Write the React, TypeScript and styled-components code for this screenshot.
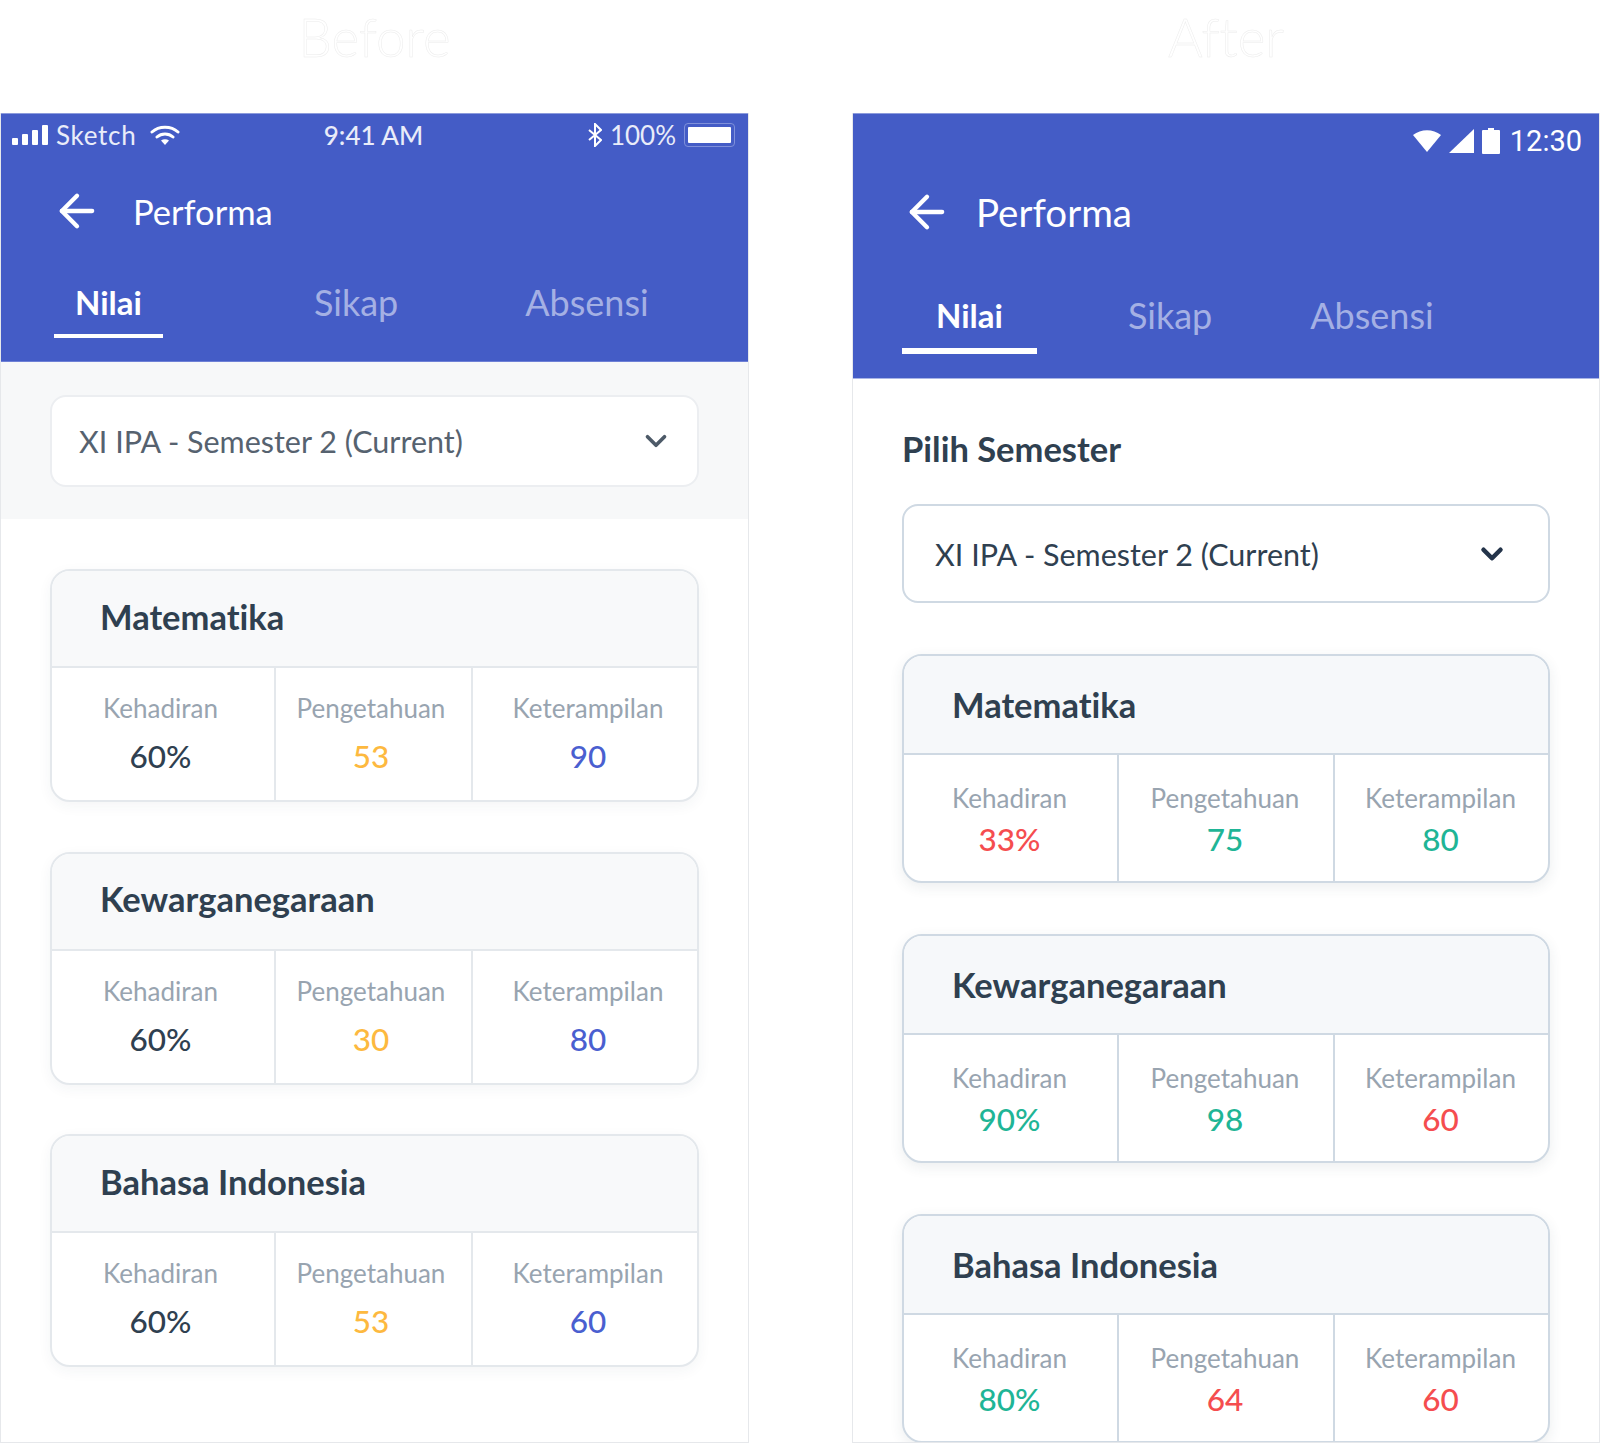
import React from "react";
import styled, { createGlobalStyle } from "styled-components";
import { ArrowLeft, ChevronDown } from "lucide-react";

type Variant = "before" | "after";

type Score = { label: string; value: string; tone: string };
type Subject = { name: string; scores: Score[] };

const YELLOW = "#fdb93f";
const BLUE = "#4a5fd0";
const DARK = "#2f4050";
const RED = "#f54d4f";
const GREEN = "#1fb596";

const makeScores = (a: string, b: string, c: string, ta: string, tb: string, tc: string): Score[] => [
  { label: "Kehadiran", value: a, tone: ta },
  { label: "Pengetahuan", value: b, tone: tb },
  { label: "Keterampilan", value: c, tone: tc },
];

const beforeSubjects: Subject[] = [
  { name: "Matematika", scores: makeScores("60%", "53", "90", DARK, YELLOW, BLUE) },
  { name: "Kewarganegaraan", scores: makeScores("60%", "30", "80", DARK, YELLOW, BLUE) },
  { name: "Bahasa Indonesia", scores: makeScores("60%", "53", "60", DARK, YELLOW, BLUE) },
];

const afterSubjects: Subject[] = [
  { name: "Matematika", scores: makeScores("33%", "75", "80", RED, GREEN, GREEN) },
  { name: "Kewarganegaraan", scores: makeScores("90%", "98", "60", GREEN, GREEN, RED) },
  { name: "Bahasa Indonesia", scores: makeScores("80%", "64", "60", GREEN, RED, RED) },
];

const SubjectCard = ({ subject, variant }: { subject: Subject; variant: Variant }) => (
  <Card $variant={variant}>
    <CardHead $variant={variant}>{subject.name}</CardHead>
    <CardBody $variant={variant}>
      {subject.scores.map((score) => (
        <Cell key={score.label} $variant={variant}>
          <CellLabel>{score.label}</CellLabel>
          <CellValue $tone={score.tone}>{score.value}</CellValue>
        </Cell>
      ))}
    </CardBody>
  </Card>
);

const App = () => (
  <>
    <GlobalStyle />
    <Page>
      <Column $width={749}>
        <Heading>Before</Heading>
        <Phone>
          <Header $variant="before">
            <IosStatus>
              <StatusSide>
                <svg width="36" height="20" viewBox="0 0 36 20" fill="#fff">
                  <rect x="0" y="13" width="6" height="7" rx="1" />
                  <rect x="10" y="9" width="6" height="11" rx="1" />
                  <rect x="20" y="5" width="6" height="15" rx="1" />
                  <rect x="30" y="0" width="6" height="20" rx="1" />
                </svg>
                <SketchLabel>Sketch</SketchLabel>
                <WifiIcon width="30" height="22" viewBox="0 0 30 22">
                  <path d="M2 8c7-6.500 19-6.500 26 0M7 13c4.500-4 11.500-4 16 0" fill="none" stroke="#fff" strokeWidth="3" strokeLinecap="round" />
                  <path d="M11 16.500c2.400-1.800 5.600-1.800 8 0L15 21z" fill="#fff" />
                </WifiIcon>
              </StatusSide>
              <StatusTime>9:41 AM</StatusTime>
              <StatusSide $end>
                <svg width="14" height="24" viewBox="0 0 14 24" fill="none" stroke="#fff" strokeWidth="2">
                  <path d="M1 7l12 10-6 6V1l6 6L1 17" />
                </svg>
                <span>100%</span>
                <Battery>
                  <BatteryFill />
                </Battery>
              </StatusSide>
            </IosStatus>
            <NavRow $variant="before">
              <ArrowLeft size={52} strokeWidth={2} color="#fff" />
              <NavTitle $variant="before">Performa</NavTitle>
            </NavRow>
            <TabRow $variant="before">
              <Tab $active $variant="before">Nilai</Tab>
              <Tab $variant="before" $offset={151}>Sikap</Tab>
              <Tab $variant="before" $offset={127}>Absensi</Tab>
            </TabRow>
          </Header>
          <SelectBand>
            <Select $variant="before">
              <SelectText $variant="before">XI IPA - Semester 2 (Current)</SelectText>
              <ChevronDown size={34} strokeWidth={2.6} color="#4d5a68" />
            </Select>
          </SelectBand>
          <CardList $variant="before">
            {beforeSubjects.map((subject) => (
              <SubjectCard key={subject.name} subject={subject} variant="before" />
            ))}
          </CardList>
        </Phone>
      </Column>
      <Column $width={748}>
        <Heading>After</Heading>
        <Phone>
          <Header $variant="after">
            <AndroidStatus>
              <svg width="28" height="22" viewBox="0 0 28 22" fill="#fff">
                <path d="M0 5C8-1.500 20-1.500 28 5L14 22z" />
              </svg>
              <svg width="25" height="24" viewBox="0 0 25 24" fill="#fff">
                <path d="M25 0v24H0z" />
              </svg>
              <svg width="18" height="26" viewBox="0 0 18 26" fill="#fff">
                <path d="M6 0h6v2h5a1 1 0 0 1 1 1v22a1 1 0 0 1-1 1H1a1 1 0 0 1-1-1V3a1 1 0 0 1 1-1h5z" />
              </svg>
              <AndroidTime>12:30</AndroidTime>
            </AndroidStatus>
            <NavRow $variant="after">
              <ArrowLeft size={52} strokeWidth={2} color="#fff" />
              <NavTitle $variant="after">Performa</NavTitle>
            </NavRow>
            <TabRow $variant="after">
              <Tab $active $variant="after">Nilai</Tab>
              <Tab $variant="after" $offset={91}>Sikap</Tab>
              <Tab $variant="after" $offset={98}>Absensi</Tab>
            </TabRow>
          </Header>
          <CardList $variant="after">
            <SectionLabel>Pilih Semester</SectionLabel>
            <Select $variant="after">
              <SelectText $variant="after">XI IPA - Semester 2 (Current)</SelectText>
              <ChevronDown size={34} strokeWidth={3.2} color="#24344a" />
            </Select>
            {afterSubjects.map((subject) => (
              <SubjectCard key={subject.name} subject={subject} variant="after" />
            ))}
          </CardList>
        </Phone>
      </Column>
    </Page>
  </>
);

export default App;

const GlobalStyle = createGlobalStyle`
  html, body {
    margin: 0;
    padding: 0;
    background: #fff;
  }
  body {
    font-family: "Lato", "Liberation Sans", sans-serif;
    font-variant-ligatures: none;
  }
`;

const Page = styled.div`
  width: 1600px;
  height: 1443px;
  overflow: hidden;
  display: flex;
  justify-content: space-between;
  box-sizing: border-box;
`;

const Column = styled.div<{ $width: number }>`
  width: ${({ $width }) => $width}px;
  display: flex;
  flex-direction: column;
  min-height: 0;
`;

const Heading = styled.h2`
  height: 113px;
  margin: 0;
  padding-bottom: 40px;
  box-sizing: border-box;
  display: flex;
  align-items: center;
  justify-content: center;
  font-size: 53px;
  font-weight: 300;
  color: #fff;
  -webkit-text-stroke: 0.5px #ececec;
`;

const Phone = styled.div`
  flex: 1;
  min-height: 0;
  overflow: hidden;
  background: #fff;
  border: 1px solid #e6e8eb;
  border-top: 0;
`;

const Header = styled.header<{ $variant: Variant }>`
  height: ${({ $variant }) => ($variant === "before" ? 249 : 266)}px;
  box-sizing: border-box;
  background: #445cc6;
  border-top: 1px solid #8c9bdc;
  border-bottom: 1px solid ${({ $variant }) => ($variant === "before" ? "#6e80d6" : "#a9b5e6")};
  color: #fff;
`;

const IosStatus = styled.div`
  height: 42px;
  padding: 0 13px 0 11px;
  display: grid;
  grid-template-columns: 1fr auto 1fr;
  align-items: center;
  font-size: 26px;
  color: #e9ecf9;
`;

const StatusSide = styled.div<{ $end?: boolean }>`
  display: flex;
  align-items: center;
  gap: 8px;
  justify-content: ${({ $end }) => ($end ? "flex-end" : "flex-start")};
`;

const SketchLabel = styled.span`
  letter-spacing: 0.7px;
`;

const WifiIcon = styled.svg`
  margin-left: 6px;
`;

const StatusTime = styled.span`
  font-weight: 500;
`;

const Battery = styled.div`
  width: 51px;
  height: 24px;
  box-sizing: border-box;
  padding: 3px;
  border: 1px solid #7f90da;
  border-radius: 4px;
  display: flex;
`;

const BatteryFill = styled.div`
  flex: 1;
  background: #fff;
  border-radius: 1px;
`;

const AndroidStatus = styled.div`
  height: 52px;
  padding: 2px 17px 0 0;
  box-sizing: border-box;
  display: flex;
  align-items: center;
  justify-content: flex-end;
  gap: 8px;
`;

const AndroidTime = styled.span`
  margin-left: 2px;
  font-family: "Roboto", sans-serif;
  font-size: 29px;
`;

const NavRow = styled.div<{ $variant: Variant }>`
  height: ${({ $variant }) => ($variant === "before" ? 60 : 54)}px;
  padding-left: ${({ $variant }) => ($variant === "before" ? 50 : 48)}px;
  margin-top: ${({ $variant }) => ($variant === "before" ? 25 : 19)}px;
  margin-bottom: ${({ $variant }) => ($variant === "before" ? 1 : 0)}px;
  display: flex;
  align-items: center;
`;

const NavTitle = styled.span<{ $variant: Variant }>`
  margin-left: ${({ $variant }) => ($variant === "before" ? 30 : 23)}px;
  font-size: ${({ $variant }) => ($variant === "before" ? 34.5 : 38.5)}px;
`;

const TabRow = styled.div<{ $variant: Variant }>`
  margin-top: ${({ $variant }) => ($variant === "before" ? 40 : 55)}px;
  padding-left: ${({ $variant }) => ($variant === "before" ? 53 : 49)}px;
  display: flex;
`;

const Tab = styled.span<{ $active?: boolean; $variant: Variant; $offset?: number }>`
  box-sizing: border-box;
  height: ${({ $variant }) => ($variant === "before" ? 57 : 60)}px;
  margin-left: ${({ $offset }) => $offset ?? 0}px;
  padding: 0 ${({ $active, $variant }) => ($active ? ($variant === "before" ? 21 : 34) : 0)}px;
  border-bottom: ${({ $active, $variant }) =>
    $active ? `${$variant === "before" ? 4 : 6}px solid #fff` : "0"};
  font-size: ${({ $active }) => ($active ? 33 : 36)}px;
  font-weight: ${({ $active }) => ($active ? 700 : 400)};
  line-height: 42px;
  color: ${({ $active }) => ($active ? "#fff" : "#a4b0e4")};
`;

const SelectBand = styled.div`
  height: 157px;
  box-sizing: border-box;
  padding: 33px 49px 0;
  background: #f7f8f9;
`;

const Select = styled.div<{ $variant: Variant }>`
  height: ${({ $variant }) => ($variant === "before" ? 92 : 99)}px;
  box-sizing: border-box;
  padding: ${({ $variant }) => ($variant === "before" ? "0 24px 0 27px" : "0 39px 0 31px")};
  margin-bottom: ${({ $variant }) => ($variant === "before" ? 0 : 51)}px;
  display: flex;
  align-items: center;
  justify-content: space-between;
  background: #fff;
  border: 2px solid ${({ $variant }) => ($variant === "before" ? "#eceef1" : "#cfd9e3")};
  border-radius: 16px;
`;

const SelectText = styled.span<{ $variant: Variant }>`
  font-size: 30.5px;
  color: ${({ $variant }) => ($variant === "before" ? "#56626f" : "#2f4050")};
`;

const CardList = styled.div<{ $variant: Variant }>`
  padding: 50px 49px 0;
  display: flex;
  flex-direction: column;
  gap: ${({ $variant }) => ($variant === "before" ? 49.5 : 0)}px;
`;

const SectionLabel = styled.div`
  height: 40px;
  margin-bottom: 35px;
  font-size: 34.5px;
  font-weight: 700;
  line-height: 40px;
  color: ${DARK};
`;

const Card = styled.div<{ $variant: Variant }>`
  flex: none;
  box-sizing: border-box;
  margin-bottom: ${({ $variant }) => ($variant === "before" ? 0 : 51)}px;
  border: 2px solid ${({ $variant }) => ($variant === "before" ? "#e4e8ec" : "#cfd9e3")};
  border-radius: 20px;
  overflow: hidden;
  background: #fff;
  box-shadow: 0 4px 14px rgba(47, 64, 80, ${({ $variant }) => ($variant === "before" ? 0.05 : 0.09)});
`;

const CardHead = styled.div<{ $variant: Variant }>`
  height: ${({ $variant }) => ($variant === "before" ? 97 : 99)}px;
  box-sizing: border-box;
  padding: 0 0 ${({ $variant }) => ($variant === "before" ? 5 : 0)}px 48px;
  display: flex;
  align-items: center;
  background: ${({ $variant }) => ($variant === "before" ? "#f8f9fa" : "#f6f8fa")};
  border-bottom: 2px solid ${({ $variant }) => ($variant === "before" ? "#e4e8ec" : "#cfd9e3")};
  font-size: 34.5px;
  font-weight: 700;
  color: ${DARK};
`;

const CardBody = styled.div<{ $variant: Variant }>`
  height: ${({ $variant }) => ($variant === "before" ? 132 : 126)}px;
  display: grid;
  grid-template-columns: ${({ $variant }) =>
    $variant === "before" ? "222px 197px 1fr" : "213px 216px 1fr"};

  & > * + * {
    border-left: 2px solid ${({ $variant }) => ($variant === "before" ? "#e4e8ec" : "#cfd9e3")};
  }
`;

const Cell = styled.div<{ $variant: Variant }>`
  padding-top: ${({ $variant }) => ($variant === "before" ? 26 : 29)}px;
  padding-right: ${({ $variant }) => ($variant === "before" ? 5 : 2)}px;
  display: flex;
  flex-direction: column;
  align-items: center;
  gap: ${({ $variant }) => ($variant === "before" ? 17 : 10)}px;

  &:last-child {
    padding-left: ${({ $variant }) => ($variant === "before" ? 6 : 0)}px;
    padding-right: ${({ $variant }) => ($variant === "before" ? 0 : 2)}px;
  }
`;

const CellLabel = styled.div`
  font-size: 26px;
  line-height: 28px;
  color: #98a4b0;
`;

const CellValue = styled.div<{ $tone: string }>`
  font-size: 31.5px;
  font-weight: 500;
  line-height: 34px;
  color: ${({ $tone }) => $tone};
`;
